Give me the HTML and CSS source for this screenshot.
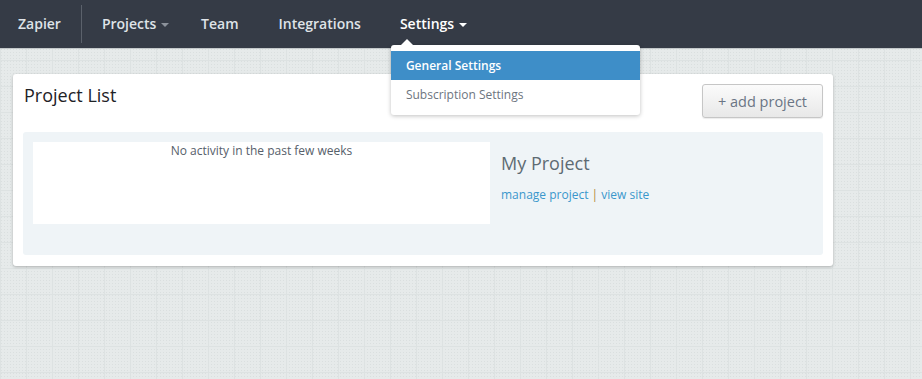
FILE: index.html
```html
<!DOCTYPE html>
<html lang="en">
<head>
    <meta charset="UTF-8">
    <title>Zapier - Projects</title>
    <link rel="stylesheet" href="styles.css">
</head>
<body>

    <header class="navbar">
        <a class="brand" href="#">Zapier</a>
        <ul class="nav">
            <li><a href="#">Projects <span class="caret"></span></a></li>
            <li><a href="#">Team</a></li>
            <li><a href="#">Integrations</a></li>
            <li class="open">
                <a href="#">Settings <span class="caret"></span></a>
                <!-- Settings menu, shown open -->
                <ul class="dropdown">
                    <li class="active"><a href="#">General Settings</a></li>
                    <li><a href="#">Subscription Settings</a></li>
                </ul>
            </li>
        </ul>
    </header>

    <main>
        <section class="panel">
            <div class="panel-head">
                <h2>Project List</h2>
                <button class="add-btn">+ add project</button>
            </div>
            <div class="project">
                <div class="activity">No activity in the past few weeks</div>
                <div class="project-info">
                    <h3>My Project</h3>
                    <p><a href="#">manage project</a> <span class="sep">|</span> <a href="#">view site</a></p>
                </div>
            </div>
        </section>
    </main>

</body>
</html>
```

FILE: styles.css
```css
body {
    margin: 0;
    font-family: 'Open Sans', 'Liberation Sans', sans-serif;
    background-color: #e6eaea;
    background-image:
        linear-gradient(90deg, #dde2e2 1px, transparent 1px),
        linear-gradient(#dde2e2 1px, transparent 1px),
        radial-gradient(#dadfdf 0.6px, transparent 0.8px);
    background-size: 26px 26px, 26px 26px, 3px 3px;
    background-position: 0 0, 0 8px, 0 0;
    height: 379px;
    overflow: hidden;
}
a {
    text-decoration: none;
}
.navbar {
    display: flex;
    align-items: center;
    height: 48px;
    background: #353b46;
    border-bottom: 1px solid #c3c8ca;
}
.brand {
    color: #dfe3e8;
    font-weight: 600;
    font-size: 14px;
    padding: 0 20px 0 18px;
    height: 38px;
    line-height: 38px;
    border-right: 1px solid #5b616b;
}
.nav {
    display: flex;
    list-style: none;
    margin: 0;
    padding: 0;
}
.nav > li {
    position: relative;
}
.nav > li > a {
    display: block;
    color: #dfe3e8;
    font-weight: 600;
    font-size: 14px;
    line-height: 44px;
    padding: 0 20px;
}
.nav > li:first-child > a {
    padding-left: 20px;
    padding-right: 11px;
}
.nav > li:nth-child(2) > a {
    padding-left: 21px;
    padding-right: 21px;
}
.nav > li:nth-child(3) > a {
    padding-left: 19px;
    padding-right: 19px;
}
.nav > li.open > a {
    color: #fff;
}
.caret {
    display: inline-block;
    width: 0;
    height: 0;
    border-left: 4px solid transparent;
    border-right: 4px solid transparent;
    border-top: 4px solid #8c929b;
    vertical-align: middle;
    margin-left: 1px;
}
.open .caret {
    border-top-color: #fff;
}
.dropdown {
    position: absolute;
    top: 43px;
    left: 11px;
    width: 249px;
    list-style: none;
    margin: 0;
    padding: 6px 0;
    background: #fff;
    border-radius: 3px;
    box-shadow: 0 1px 4px rgba(0, 0, 0, 0.25);
    z-index: 10;
}
.dropdown::before {
    content: "";
    position: absolute;
    top: -6px;
    left: 10px;
    border-left: 6px solid transparent;
    border-right: 6px solid transparent;
    border-bottom: 6px solid #fff;
}
.dropdown a {
    display: block;
    padding: 0 15px;
    line-height: 29px;
    font-size: 12px;
    color: #6d7580;
}
.dropdown .active a {
    background: #3e8ec8;
    color: #fff;
    font-weight: 600;
}
main {
    padding: 25px 13px;
}
.panel {
    width: 800px;
    background: #fff;
    border-radius: 3px;
    box-shadow: 0 1px 3px rgba(0, 0, 0, 0.25);
    padding: 10px 10px 11px 10px;
}
.panel-head {
    display: flex;
    justify-content: space-between;
    align-items: flex-start;
    height: 48px;
}
.panel-head h2 {
    margin: 0;
    font-size: 18px;
    font-weight: 400;
    color: #1e2226;
    line-height: 23px;
    padding-left: 1px;
}
.add-btn {
    width: 121px;
    height: 34px;
    font-family: inherit;
    font-size: 14.5px;
    color: #6a7585;
    background: linear-gradient(#fbfbfb, #e8e8e8);
    border: 1px solid #c6c6c6;
    border-radius: 3px;
    box-shadow: 0 1px 1px rgba(0, 0, 0, 0.08);
}
.project {
    display: flex;
    background: #eff4f7;
    border-radius: 3px;
    padding: 10px 10px 31px 10px;
}
.activity {
    width: 457px;
    height: 82px;
    background: #fff;
    text-align: center;
    font-size: 12px;
    color: #56606a;
    line-height: 18px;
}
.project-info {
    padding-left: 11px;
}
.project-info h3 {
    margin: 10px 0 0;
    font-size: 18px;
    font-weight: 400;
    color: #5e6b73;
    line-height: 22px;
}
.project-info p {
    margin: 12px 0 0;
    font-size: 12px;
    line-height: 18px;
}
.project-info a {
    color: #3a97cc;
}
.sep {
    color: #b08a3c;
}
```
